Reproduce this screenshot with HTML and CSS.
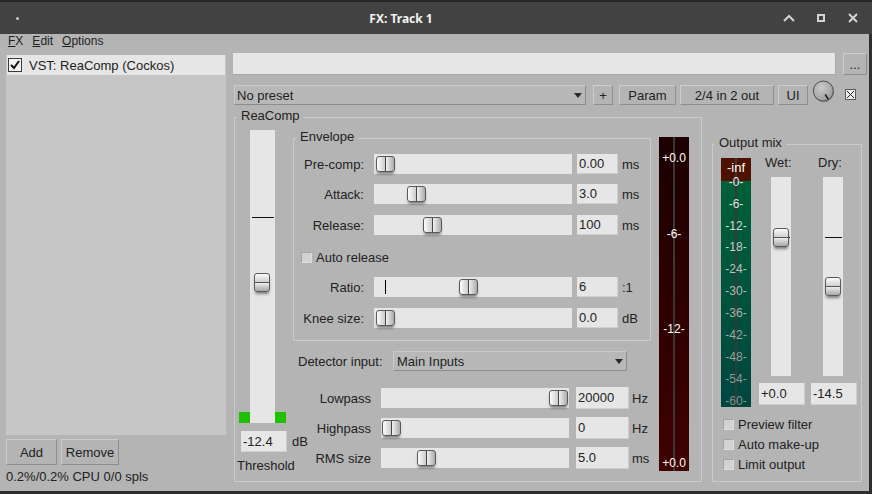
FILE: index.html
```html
<!DOCTYPE html>
<html lang="en">
<head>
    <meta charset="UTF-8">
    <title>FX: Track 1</title>
    <link rel="stylesheet" href="styles.css">
</head>
<body>
    <div class="titlebar">
        <span class="title-dot"></span>
        <span class="title">FX: Track 1</span>
        <svg class="tb-icon tb-min" width="12" height="8" viewBox="0 0 12 8"><path d="M1 7 L6 2 L11 7"/></svg>
        <svg class="tb-icon tb-max" width="8" height="8" viewBox="0 0 8 8"><rect x="1" y="1" width="6" height="6"/></svg>
        <svg class="tb-icon tb-close" width="10" height="10" viewBox="0 0 10 10"><path d="M1 1 L9 9 M9 1 L1 9"/></svg>
    </div>

    <div class="client">
        <div class="sidebar">
            <div class="menubar">
                <span><u>F</u>X</span>
                <span><u>E</u>dit</span>
                <span><u>O</u>ptions</span>
            </div>
            <div class="fx-list">
                <div class="fx-item">
                    <span class="fx-check">
                        <svg width="12" height="12" viewBox="0 0 12 12"><path d="M2 6 L5 9 L10 2"/></svg>
                    </span>
                    <span class="fx-name">VST: ReaComp (Cockos)</span>
                </div>
            </div>
            <div class="list-buttons">
                <button class="btn btn-add">Add</button>
                <button class="btn btn-remove">Remove</button>
            </div>
            <div class="cpu">0.2%/0.2% CPU 0/0 spls</div>
        </div>

        <div class="plugin">
            <div class="path-row">
                <div class="path-field"></div>
                <button class="btn btn-browse">...</button>
            </div>

            <div class="preset-row">
                <div class="combo combo-preset">No preset<span class="combo-arrow"></span></div>
                <button class="btn btn-plus">+</button>
                <button class="btn btn-param">Param</button>
                <button class="btn btn-io">2/4 in 2 out</button>
                <button class="btn btn-ui">UI</button>
                <svg class="knob" width="24" height="24" viewBox="0 0 24 24">
                    <defs>
                        <radialGradient id="knob-fill" cx="40%" cy="35%" r="70%">
                            <stop offset="0" stop-color="#c8c8c8"/>
                            <stop offset="1" stop-color="#9c9c9c"/>
                        </radialGradient>
                    </defs>
                    <circle cx="11.8" cy="13" r="10.4" fill="#6a6a6a" opacity="0.5"/>
                    <circle cx="11.3" cy="12" r="10" fill="url(#knob-fill)" stroke="#4e4e4e"/>
                    <path d="M13.2 15.3 L16.2 20.4" stroke="#111" stroke-width="1.4"/>
                </svg>
                <svg class="bypass" width="11" height="11" viewBox="0 0 11 11">
                    <rect x="0.5" y="0.5" width="10" height="10" fill="#ececec" stroke="#5a5a5a"/>
                    <path d="M2 2 L9 9 M9 2 L2 9" stroke="#222" stroke-width="1"/>
                </svg>
            </div>

            <div class="main-row">
                <div class="group reacomp">
                    <span class="group-title">ReaComp</span>

                    <div class="thresh-col">
                        <div class="thresh-slider">
                            <span class="led"></span>
                            <div class="vtrack thresh-track">
                                <span class="vmark" style="top:87px"></span>
                                <span class="vthumb" style="top:143px; left:4px"></span>
                            </div>
                            <span class="led"></span>
                        </div>
                        <div class="thresh-value">
                            <span class="vbox thresh-box">-12.4</span>
                            <span class="unit">dB</span>
                        </div>
                        <div class="thresh-label">Threshold</div>
                    </div>

                    <div class="center-col">
                        <div class="group envelope">
                            <span class="group-title">Envelope</span>
                            <div class="env-row">
                                <span class="row-label">Pre-comp:</span>
                                <div class="htrack env-track"><span class="hthumb" style="left:2px"></span></div>
                                <span class="vbox env-val">0.00</span>
                                <span class="unit">ms</span>
                            </div>
                            <div class="env-row">
                                <span class="row-label">Attack:</span>
                                <div class="htrack env-track"><span class="hthumb" style="left:33px"></span></div>
                                <span class="vbox env-val">3.0</span>
                                <span class="unit">ms</span>
                            </div>
                            <div class="env-row row-release">
                                <span class="row-label">Release:</span>
                                <div class="htrack env-track"><span class="hthumb" style="left:49px"></span></div>
                                <span class="vbox env-val">100</span>
                                <span class="unit">ms</span>
                            </div>
                            <div class="env-row row-auto">
                                <span class="cb"></span>
                                <span class="cb-label">Auto release</span>
                            </div>
                            <div class="env-row">
                                <span class="row-label">Ratio:</span>
                                <div class="htrack env-track">
                                    <span class="hmark" style="left:11px"></span>
                                    <span class="hthumb" style="left:85px"></span>
                                </div>
                                <span class="vbox env-val">6</span>
                                <span class="unit">:1</span>
                            </div>
                            <div class="env-row row-knee">
                                <span class="row-label">Knee size:</span>
                                <div class="htrack env-track"><span class="hthumb" style="left:2px"></span></div>
                                <span class="vbox env-val">0.0</span>
                                <span class="unit">dB</span>
                            </div>
                        </div>

                        <div class="detector-row">
                            <span class="detector-label">Detector input:</span>
                            <div class="combo combo-detector">Main Inputs<span class="combo-arrow"></span></div>
                        </div>

                        <div class="filter-row first">
                            <span class="row-label filter-label">Lowpass</span>
                            <div class="htrack filter-track"><span class="hthumb" style="left:168px"></span></div>
                            <span class="vbox filter-val">20000</span>
                            <span class="unit">Hz</span>
                        </div>
                        <div class="filter-row">
                            <span class="row-label filter-label">Highpass</span>
                            <div class="htrack filter-track"><span class="hthumb" style="left:1px"></span></div>
                            <span class="vbox filter-val">0</span>
                            <span class="unit">Hz</span>
                        </div>
                        <div class="filter-row">
                            <span class="row-label filter-label">RMS size</span>
                            <div class="htrack filter-track"><span class="hthumb" style="left:36px"></span></div>
                            <span class="vbox filter-val">5.0</span>
                            <span class="unit">ms</span>
                        </div>
                    </div>

                    <div class="meter gr-meter">
                        <div class="meter-line"></div>
                        <span class="mlabel" style="top:14px">+0.0</span>
                        <span class="mlabel" style="top:90px">-6-</span>
                        <span class="mlabel" style="top:185px">-12-</span>
                        <span class="mlabel" style="top:319px">+0.0</span>
                    </div>
                </div>

                <div class="group output-mix">
                    <span class="group-title">Output mix</span>
                    <div class="mix-top">
                        <div class="meter mix-meter">
                            <div class="meter-line"></div>
                            <span class="mlabel inf" style="top:3px">-inf</span>
                            <span class="mlabel" style="top:17px">-0-</span>
                            <span class="mlabel" style="top:39px">-6-</span>
                            <span class="mlabel" style="top:61px">-12-</span>
                            <span class="mlabel" style="top:82px">-18-</span>
                            <span class="mlabel" style="top:104px">-24-</span>
                            <span class="mlabel" style="top:126px">-30-</span>
                            <span class="mlabel" style="top:148px">-36-</span>
                            <span class="mlabel" style="top:170px">-42-</span>
                            <span class="mlabel" style="top:192px">-48-</span>
                            <span class="mlabel" style="top:214px">-54-</span>
                            <span class="mlabel" style="top:236px">-60-</span>
                        </div>
                        <div class="mix-col wet">
                            <div class="mix-label">Wet:</div>
                            <div class="vtrack mix-track">
                                <span class="vmark" style="top:60px"></span>
                                <span class="vthumb" style="top:51px; left:2px"></span>
                            </div>
                            <span class="vbox mix-val">+0.0</span>
                        </div>
                        <div class="mix-col dry">
                            <div class="mix-label">Dry:</div>
                            <div class="vtrack mix-track">
                                <span class="vmark" style="top:60px"></span>
                                <span class="vthumb" style="top:100px; left:2px"></span>
                            </div>
                            <span class="vbox mix-val">-14.5</span>
                        </div>
                    </div>
                    <div class="mix-checks">
                        <div class="mix-check"><span class="cb"></span><span class="cb-label">Preview filter</span></div>
                        <div class="mix-check"><span class="cb"></span><span class="cb-label">Auto make-up</span></div>
                        <div class="mix-check"><span class="cb"></span><span class="cb-label">Limit output</span></div>
                    </div>
                </div>
            </div>
        </div>
    </div>
</body>
</html>
```

FILE: styles.css
```css
* {
    box-sizing: border-box;
}

body {
    margin: 0;
    width: 872px;
    height: 494px;
    overflow: hidden;
    background: #2f2f2f;
    font-family: "Liberation Sans", Arial, sans-serif;
    font-size: 13px;
    color: #222;
}

/* window title bar */
.titlebar {
    height: 34px;
    border-top: 2px solid #262626;
    background: #424242;
    display: flex;
    align-items: center;
}

.title-dot {
    width: 3px;
    height: 3px;
    margin-left: 16px;
    border-radius: 50%;
    background: #c8c8c8;
}

.title {
    flex: 1;
    text-align: center;
    color: #f2f2f2;
    font-family: "Noto Sans", sans-serif;
    font-weight: bold;
    font-size: 12px;
}

.tb-icon {
    fill: none;
    stroke: #d4d4d4;
    stroke-width: 2;
}

.tb-min { margin-right: 22px; }
.tb-max { margin-right: 23px; }
.tb-close { margin-right: 14px; }

/* client area */
.client {
    display: flex;
    width: 869px;
    height: 457px;
    background: #b4b4b4;
}

.sidebar {
    width: 220px;
    margin-left: 6px;
    display: flex;
    flex-direction: column;
}

.menubar {
    display: flex;
    gap: 9px;
    height: 21px;
    padding-left: 2px;
    font-size: 12px;
    line-height: 15px;
}

.fx-list {
    height: 380px;
    background: #c6c6c6;
}

.fx-item {
    display: flex;
    align-items: center;
    height: 20px;
    margin: 0 1px;
    padding-left: 1px;
    background: #e6e6e6;
}

.fx-check {
    width: 14px;
    height: 14px;
    border: 1px solid #3a3a3a;
    background: #f4f4f4;
    display: flex;
    align-items: center;
    justify-content: center;
}

.fx-check svg {
    fill: none;
    stroke: #111;
    stroke-width: 2;
}

.fx-name {
    margin-left: 7px;
}

.btn {
    font: inherit;
    color: #222;
    padding: 0;
    height: 20px;
    background: #b4b4b4;
    border: 1px solid;
    border-color: #cdcdcd #8e8e8e #8e8e8e #cdcdcd;
}

.list-buttons {
    display: flex;
    gap: 4px;
    margin-top: 4px;
}

.btn-add { width: 51px; height: 26px; }
.btn-remove { width: 58px; height: 26px; }

.cpu {
    margin-top: 1px;
    line-height: 22px;
}

/* plugin side */
.plugin {
    width: 636px;
    margin-left: 7px;
    display: flex;
    flex-direction: column;
}

.path-row {
    display: flex;
    height: 22px;
    margin-top: 19px;
}

.path-field {
    width: 603px;
    background: #e6e6e6;
    border-right: 1px solid #a8a8a8;
    border-bottom: 1px solid #a8a8a8;
}

.btn-browse {
    width: 24px;
    height: 22px;
    margin-left: 7px;
}

.preset-row {
    display: flex;
    align-items: center;
    height: 20px;
    margin-top: 10px;
}

.combo {
    display: flex;
    align-items: center;
    height: 20px;
    padding-left: 2px;
    background: #b8b8b8;
    border: 1px solid;
    border-color: #c9c9c9 #8c8c8c #8c8c8c #c9c9c9;
}

.combo-arrow {
    margin-left: auto;
    margin-right: 3px;
    width: 0;
    height: 0;
    border-left: 4px solid transparent;
    border-right: 4px solid transparent;
    border-top: 5px solid #2a2a2a;
}

.combo-preset {
    width: 352px;
    margin-left: 1px;
}

.btn-plus { width: 20px; margin-left: 7px; }
.btn-param { width: 57px; margin-left: 6px; }
.btn-io { width: 94px; margin-left: 4px; }
.btn-ui { width: 30px; margin-left: 4px; }

.knob {
    align-self: flex-start;
    margin-top: -6px;
    margin-left: 4px;
}

.bypass {
    align-self: flex-start;
    margin-top: 4px;
    margin-left: 9px;
}

/* groups */
.main-row {
    display: flex;
    align-items: flex-start;
    margin-top: 12px;
}

.group {
    position: relative;
    border: 1px solid #cacaca;
}

.group-title {
    position: absolute;
    top: -10px;
    left: 2px;
    padding: 0 4px;
    line-height: 16px;
    background: #b4b4b4;
    white-space: nowrap;
}

.reacomp {
    display: flex;
    align-items: flex-start;
    width: 468px;
    height: 365px;
    margin-left: 1px;
}

/* threshold */
.thresh-col {
    width: 58px;
    flex: none;
}

.thresh-slider {
    display: flex;
    align-items: flex-end;
    margin: 12px 0 0 4px;
}

.led {
    width: 11px;
    height: 11px;
    background: #1fc000;
}

.vtrack {
    position: relative;
    background: #e6e6e6;
}

.thresh-track {
    width: 25px;
    height: 293px;
}

.vmark {
    position: absolute;
    left: 2px;
    right: 1px;
    height: 1px;
    background: #111;
}

.vthumb {
    position: absolute;
    width: 16px;
    height: 19px;
    border: 1px solid #5a5a5a;
    border-radius: 3px;
    background: linear-gradient(#fcfcfc, #cfcfcf 47%, #eeeeee 53%, #a6a6a6);
    box-shadow: 0 3px 3px -1px rgba(0, 0, 0, 0.45);
}

.vthumb::after {
    content: "";
    position: absolute;
    left: 0;
    right: 0;
    top: 8px;
    height: 1px;
    background: #555;
}

.thresh-value {
    display: flex;
    align-items: center;
    margin: 8px 0 0 6px;
    white-space: nowrap;
}

.vbox {
    flex: none;
    background: #e6e6e6;
    padding-left: 2px;
    border-right: 1px solid #cfcfcf;
    border-bottom: 1px solid #cfcfcf;
    display: flex;
    align-items: center;
}

.thresh-box {
    width: 46px;
    height: 21px;
}

.unit {
    margin-left: 4px;
    white-space: nowrap;
}

.thresh-value .unit {
    margin-left: 5px;
}

.thresh-label {
    margin: 3px 0 0 2px;
    line-height: 22px;
}

/* envelope */
.center-col {
    width: 359px;
    flex: none;
}

.envelope {
    width: 358px;
    margin-top: 20px;
    padding: 15px 0 12px 0;
}

.env-row {
    display: flex;
    align-items: center;
    height: 20px;
}

.env-row + .env-row { margin-top: 10px; }
.env-row.row-release { margin-top: 11px; }
.env-row.row-auto { margin-top: 12px; }
.env-row.row-knee { margin-top: 11px; }

.row-label {
    width: 70px;
    text-align: right;
    flex: none;
}

.htrack {
    position: relative;
    height: 20px;
    background: #e6e6e6;
    flex: none;
}

.env-track {
    width: 198px;
    margin-left: 10px;
}

.hthumb {
    position: absolute;
    top: 2px;
    width: 19px;
    height: 16px;
    border: 1px solid #5a5a5a;
    border-radius: 3px;
    background: linear-gradient(to right, #fcfcfc, #cdcdcd 46%, #efefef 54%, #ababab);
    box-shadow: 0 3px 3px -1px rgba(0, 0, 0, 0.45);
}

.hthumb::after {
    content: "";
    position: absolute;
    top: 0;
    bottom: 0;
    left: 8px;
    width: 1px;
    background: #444;
}

.hmark {
    position: absolute;
    top: 3px;
    width: 1px;
    height: 14px;
    background: #000;
}

.env-val {
    width: 41px;
    height: 20px;
    margin-left: 5px;
}

.cb {
    flex: none;
    width: 11px;
    height: 11px;
    background: #d2d2d2;
    border: 1px solid;
    border-color: #a2a2a2 #dedede #dedede #a2a2a2;
}

.row-auto .cb {
    margin-left: 7px;
}

.cb-label {
    margin-left: 4px;
    white-space: nowrap;
}

/* detector & filters */
.detector-row {
    display: flex;
    align-items: center;
    height: 20px;
    margin-top: 10px;
    padding-left: 5px;
}

.detector-label {
    width: 95px;
    flex: none;
}

.combo-detector {
    width: 234px;
    padding-left: 3px;
}

.filter-row {
    display: flex;
    align-items: center;
    height: 20px;
    margin-top: 10px;
}

.filter-row.first {
    margin-top: 17px;
}

.filter-label {
    width: 78px;
}

.filter-track {
    width: 188px;
    margin-left: 10px;
}

.filter-val {
    width: 53px;
    height: 22px;
    margin-left: 7px;
}

.filter-row .unit {
    margin-left: 3px;
}

/* meters */
.meter {
    position: relative;
    width: 30px;
    flex: none;
}

.gr-meter {
    height: 334px;
    margin: 19px 0 0 7px;
    background: linear-gradient(#1c0000, #400000);
}

.meter-line {
    position: absolute;
    top: 0;
    bottom: 0;
    left: 14px;
    width: 2px;
    background: #383838;
}

.mlabel {
    position: absolute;
    left: 0;
    right: 0;
    text-align: center;
    font-size: 12px;
    line-height: 14px;
    color: #fff;
}

.mix-meter {
    height: 249px;
    margin: 13px 0 0 8px;
    background: linear-gradient(#4e1200 0, #4e1200 23px, #006038 23px, #00463f 100%);
}

.mix-meter .mlabel.inf { font-size: 13px; color: #fff; }
.mix-meter .mlabel:nth-of-type(2) { color: #ececec; }
.mix-meter .mlabel:nth-of-type(3) { color: #e0e2e1; }
.mix-meter .mlabel:nth-of-type(4) { color: #d4d8d6; }
.mix-meter .mlabel:nth-of-type(5) { color: #c8cdcb; }
.mix-meter .mlabel:nth-of-type(6) { color: #bdc3c0; }
.mix-meter .mlabel:nth-of-type(7) { color: #b3bab7; }
.mix-meter .mlabel:nth-of-type(8) { color: #aab2ae; }
.mix-meter .mlabel:nth-of-type(9) { color: #a1a9a5; }
.mix-meter .mlabel:nth-of-type(10) { color: #98a09c; }
.mix-meter .mlabel:nth-of-type(11) { color: #8f9894; }
.mix-meter .mlabel:nth-of-type(12) { color: #87908c; }

/* output mix */
.output-mix {
    width: 150px;
    height: 338px;
    margin: 27px 0 0 10px;
}

.mix-top {
    display: flex;
    align-items: flex-start;
}

.mix-col {
    width: 46px;
    flex: none;
    margin-top: 10px;
    display: flex;
    flex-direction: column;
}

.mix-col.wet { margin-left: 8px; }
.mix-col.dry { margin-left: 6px; }

.mix-label {
    line-height: 16px;
    padding-left: 6px;
}

.dry .mix-label {
    padding-left: 7px;
}

.mix-track {
    width: 20px;
    height: 199px;
    margin: 6px 0 0 12px;
}

.mix-val {
    width: 46px;
    height: 22px;
    margin-top: 7px;
}

.mix-checks {
    margin-top: 7px;
}

.mix-check {
    display: flex;
    align-items: center;
    height: 20px;
    padding-left: 10px;
}
```
